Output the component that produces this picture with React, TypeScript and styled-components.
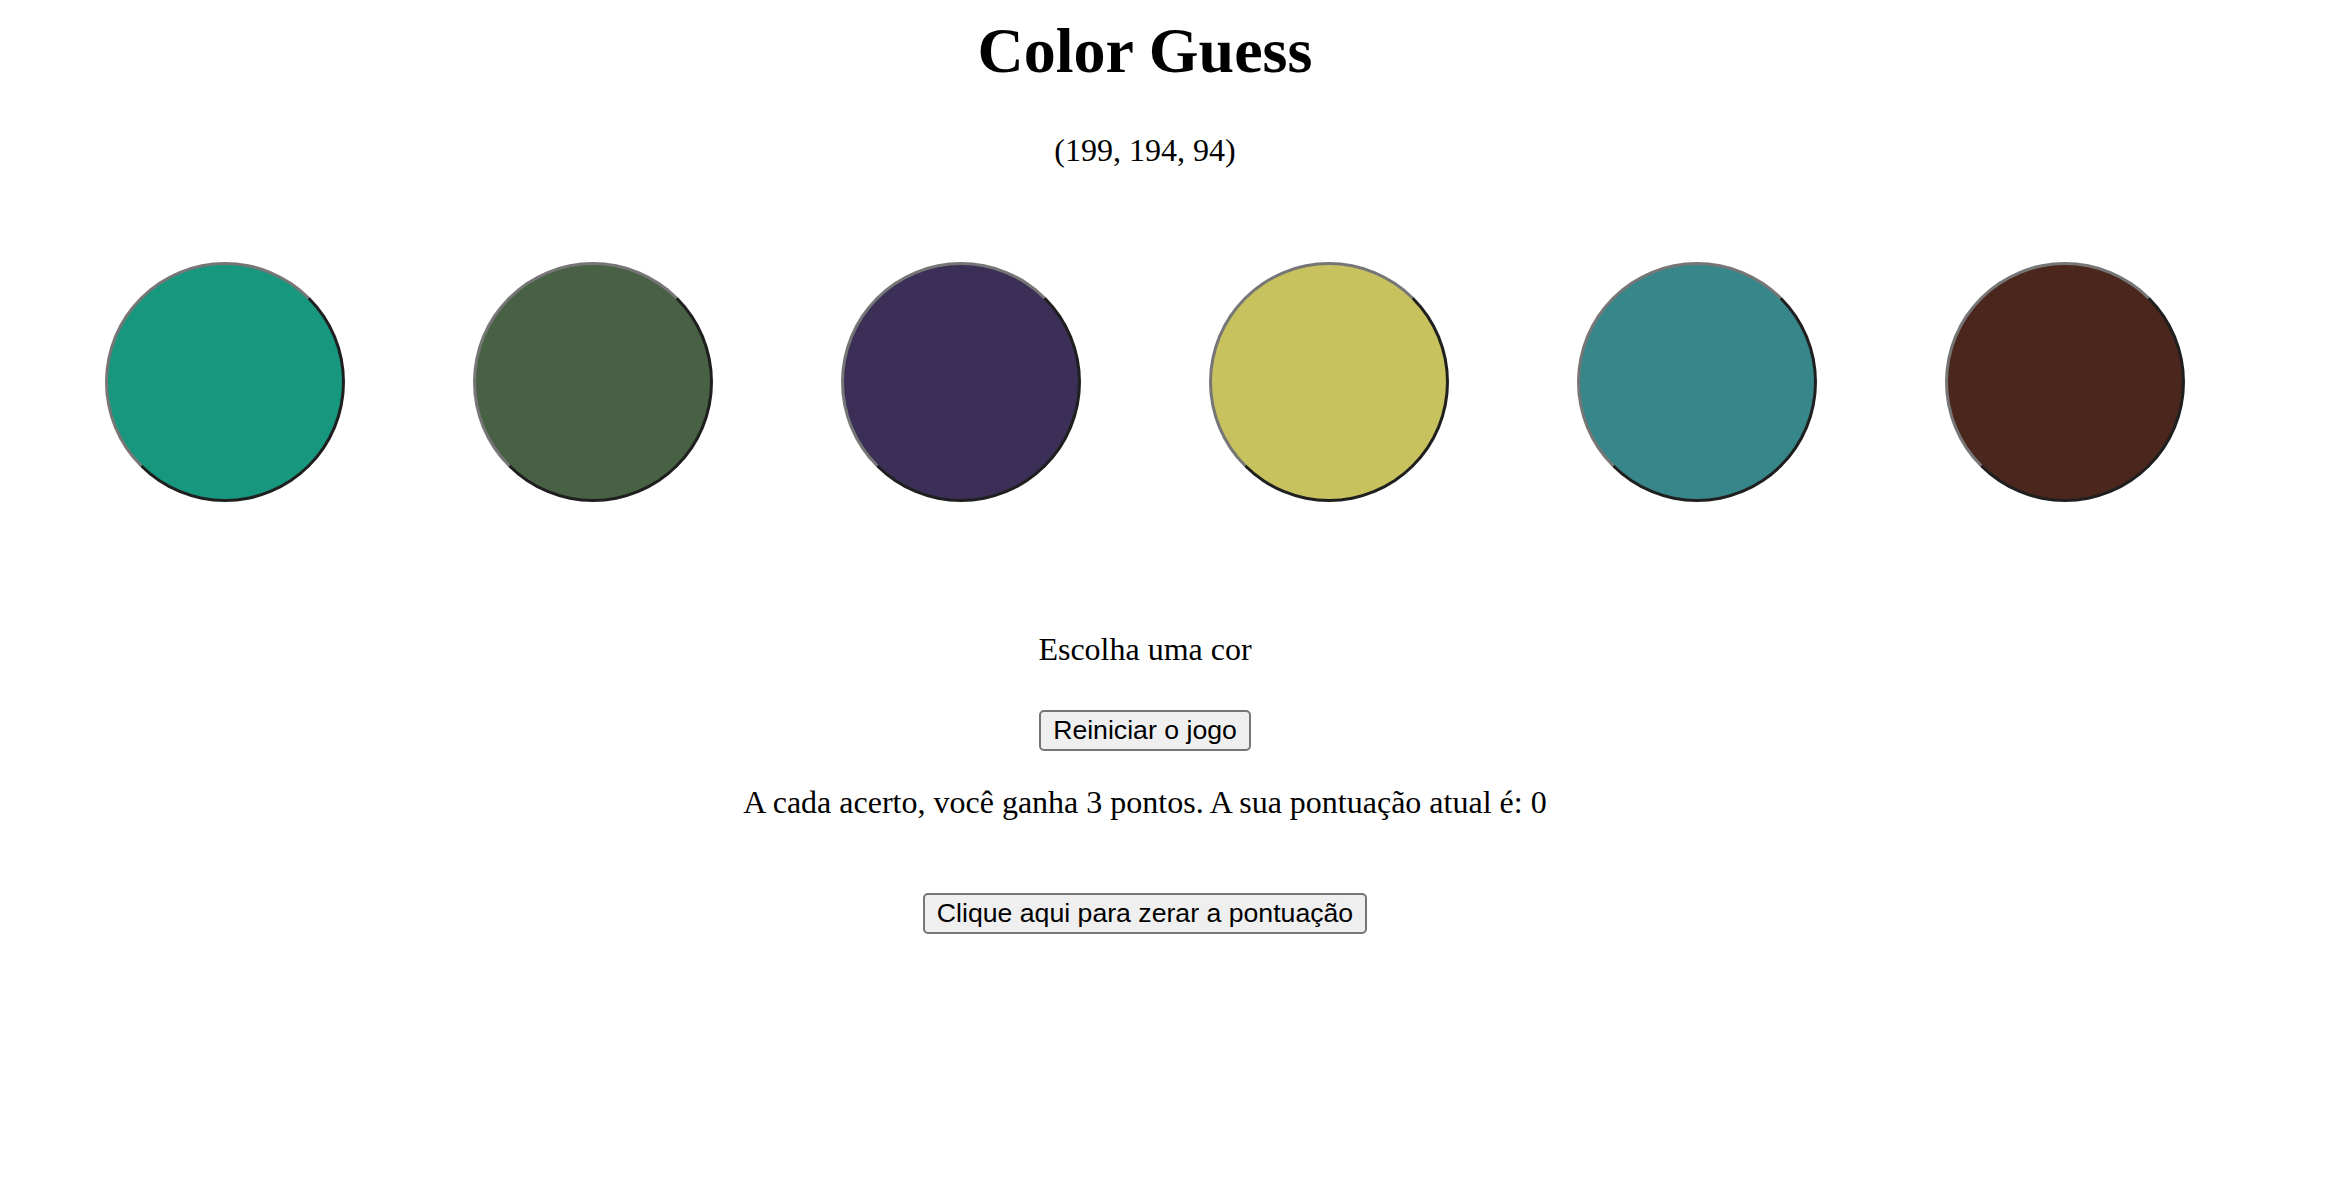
import React from "react";
import styled, { createGlobalStyle } from "styled-components";

const GlobalStyle = createGlobalStyle`
  html, body {
    margin: 0;
    padding: 0;
    background: #ffffff;
  }
  body {
    font-family: "Liberation Serif", "Times New Roman", serif;
    color: #000000;
  }
`;

const Page = styled.main`
  display: flex;
  flex-direction: column;
  align-items: center;
  padding: 14px 52px 0 16px;
  font-family: "Liberation Serif", "Times New Roman", serif;
`;

const Title = styled.h1`
  margin: 0;
  font-size: 64px;
  font-weight: 700;
  line-height: 1.15;
`;

const Target = styled.p`
  margin: 44px 0 0;
  font-size: 32px;
  line-height: 1.15;
`;

const CircleRow = styled.div`
  display: flex;
  justify-content: center;
  gap: 128px;
  margin-top: 94px;
`;

const Circle = styled.button<{ $color: string }>`
  box-sizing: border-box;
  width: 240px;
  height: 240px;
  padding: 0;
  border-radius: 50%;
  border-width: 3px;
  border-style: solid;
  border-color: #767676 #1f1f1f #1f1f1f #767676;
  background: ${(p) => p.$color};
  cursor: pointer;
`;

const Message = styled.p<{ $top: number }>`
  margin: ${(p) => p.$top}px 0 0;
  font-size: 32px;
  line-height: 1.15;
`;

const ActionButton = styled.button<{ $top: number }>`
  box-sizing: border-box;
  margin-top: ${(p) => p.$top}px;
  height: 41px;
  padding: 0 12px;
  font-family: "Liberation Sans", Arial, sans-serif;
  font-size: 26.67px;
  line-height: 1;
  color: #000000;
  background: #efefef;
  border: 2px solid #767676;
  border-radius: 5px;
  cursor: pointer;
`;

const colors = [
  "#16977e",
  "#486144",
  "#3b2f57",
  "#c7c25e",
  "#37868a",
  "#4b261d",
];

export default function App() {
  return (
    <>
      <GlobalStyle />
      <Page>
        <Title>Color Guess</Title>
        <Target>(199, 194, 94)</Target>
        <CircleRow>
          {colors.map((c) => (
            <Circle key={c} $color={c} aria-label={c} />
          ))}
        </CircleRow>
        <Message $top={129}>Escolha uma cor</Message>
        <ActionButton $top={42}>Reiniciar o jogo</ActionButton>
        <Message $top={33}>
          A cada acerto, você ganha 3 pontos. A sua pontuação atual é: 0
        </Message>
        <ActionButton $top={72}>Clique aqui para zerar a pontuação</ActionButton>
      </Page>
    </>
  );
}
